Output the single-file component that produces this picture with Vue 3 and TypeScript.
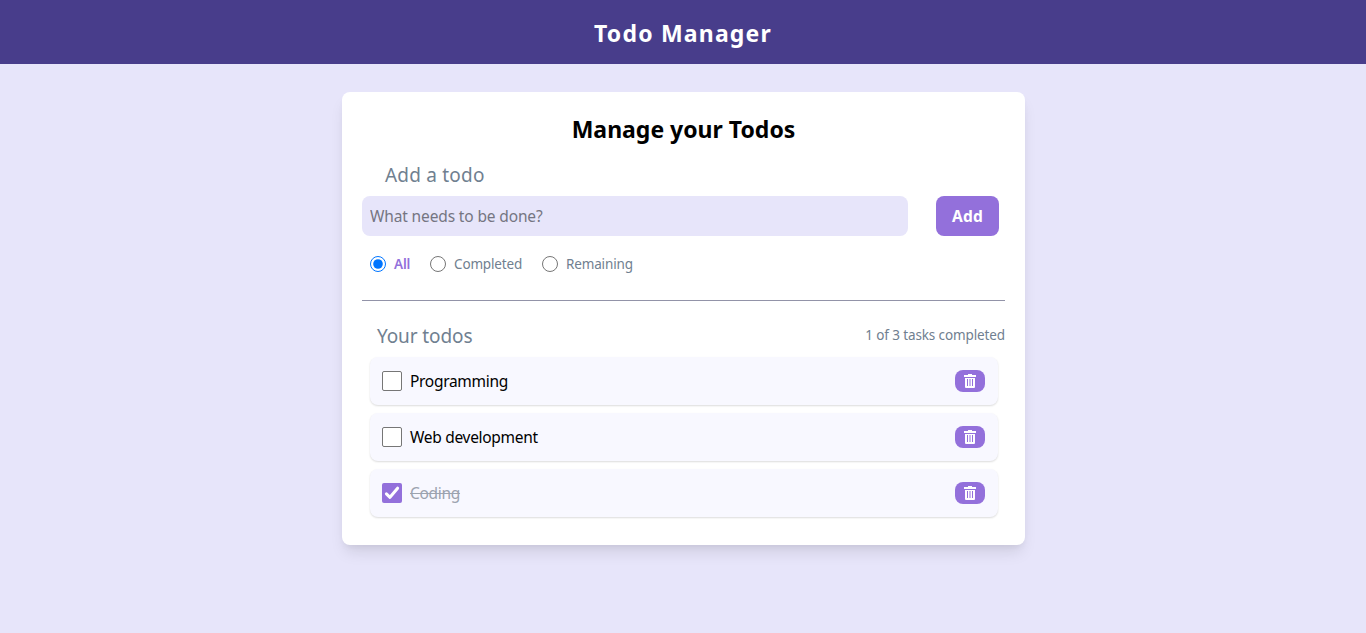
<script setup lang="ts">
import { computed, ref } from 'vue'

interface Todo {
  id: number
  title: string
  done: boolean
}
type Filter = 'All' | 'Completed' | 'Remaining'

const filters: Filter[] = ['All', 'Completed', 'Remaining']
const filter = ref<Filter>('All')
const draft = ref('')
const todos = ref<Todo[]>([
  { id: 1, title: 'Programming', done: false },
  { id: 2, title: 'Web development', done: false },
  { id: 3, title: 'Coding', done: true },
])

const doneCount = computed(() => todos.value.filter((t) => t.done).length)
const visible = computed(() =>
  todos.value.filter((t) => filter.value === 'All' || t.done === (filter.value === 'Completed')),
)

function add() {
  const title = draft.value.trim()
  if (!title) return
  todos.value.push({ id: Date.now(), title, done: false })
  draft.value = ''
}
function remove(id: number) {
  todos.value = todos.value.filter((t) => t.id !== id)
}
</script>

<template>
  <div class="page">
    <header class="bar"><h1 class="brand">Todo Manager</h1></header>
    <main class="card">
      <h2 class="title">Manage your Todos</h2>
      <label class="add-label" for="new-todo">Add a todo</label>
      <form class="add-row" @submit.prevent="add">
        <input id="new-todo" v-model="draft" class="field" type="text" placeholder="What needs to be done?" />
        <button class="add" type="submit">Add</button>
      </form>
      <div class="filters">
        <label v-for="f in filters" :key="f" class="filter" :class="[f.toLowerCase(), { active: filter === f }]">
          <input v-model="filter" class="radio" type="radio" name="filter" :value="f" />
          <span class="filter-text">{{ f }}</span>
        </label>
      </div>
      <hr class="rule" />
      <div class="list-head">
        <h3 class="list-title">Your todos</h3>
        <span class="count">{{ doneCount }} of {{ todos.length }} tasks completed</span>
      </div>
      <ul class="list">
        <li v-for="t in visible" :key="t.id" class="item" :class="{ done: t.done }">
          <label class="check">
            <input v-model="t.done" class="native" type="checkbox" />
            <span class="box">
              <svg v-if="t.done" width="20" height="20" viewBox="0 0 20 20">
                <path
                  d="M4.4 10.8 8 14.3 15.6 5.2"
                  fill="none"
                  stroke="#fff"
                  stroke-width="3"
                  stroke-linecap="round"
                  stroke-linejoin="round"
                />
              </svg>
            </span>
            <span class="text">{{ t.title }}</span>
          </label>
          <button class="delete" type="button" aria-label="Delete" @click="remove(t.id)">
            <svg width="12" height="14" viewBox="0 0 12 14">
              <path
                fill="#fff"
                fill-rule="evenodd"
                d="M4 0h4v1h4v2H0V1h4zM1 4h10v9q0 1-1 1H2q-1 0-1-1zM3 5v7h1V5zM5.5 5v7h1V5zM8 5v7h1V5z"
              />
            </svg>
          </button>
        </li>
      </ul>
    </main>
  </div>
</template>

<style>
body {
  margin: 0;
  background: #e7e5fa;
}
</style>

<style scoped>
.page {
  box-sizing: border-box;
  min-height: 633px;
  background: #e7e5fa;
  font-family: 'Noto Sans', 'Open Sans', sans-serif;
}
.page * {
  box-sizing: border-box;
}
.bar {
  display: flex;
  height: 64px;
  align-items: center;
  justify-content: center;
  background: #483d8b;
}
.brand {
  margin: 0;
  padding-top: 1px;
  color: #fff;
  font-size: 23px;
  font-weight: 700;
  line-height: 32px;
  letter-spacing: 1.2px;
}
.card {
  width: 683px;
  height: 453px;
  margin: 28px auto 0 342px;
  padding: 20px;
  border-radius: 8px;
  background: #fff;
  box-shadow: 0 10px 15px -3px rgba(0, 0, 0, 0.1), 0 4px 6px -2px rgba(0, 0, 0, 0.05);
}
.title {
  margin: 1px 0 0;
  color: #000;
  font-size: 23px;
  font-weight: 700;
  line-height: 32px;
  text-align: center;
}
.add-label {
  display: block;
  margin: 16px 0 0 23px;
  color: #708090;
  font-size: 19px;
  line-height: 28px;
  letter-spacing: 0.2px;
}
.add-row {
  display: flex;
  gap: 28px;
  margin-top: 7px;
}
.field {
  width: 546px;
  height: 40px;
  padding: 0 8px;
  border: 0;
  border-radius: 8px;
  outline: 0;
  background: #e7e5fa;
  color: #000;
  font-family: inherit;
  font-size: 15.5px;
  letter-spacing: -0.14px;
}
.field::placeholder {
  color: #757582;
  opacity: 1;
}
.add {
  width: 63px;
  height: 40px;
  padding: 0;
  border: 0;
  border-radius: 8px;
  background: #9370db;
  color: #fff;
  font-family: inherit;
  font-size: 15.5px;
  font-weight: 700;
  letter-spacing: 0.2px;
}
.filters {
  display: flex;
  height: 20px;
  margin: 18px 0 0 8px;
}
.filter {
  display: flex;
  width: 112px;
  align-items: center;
  gap: 8px;
  color: #708090;
  font-size: 13.5px;
  line-height: 20px;
  letter-spacing: -0.15px;
}
.filter.all {
  width: 60px;
}
.filter.active {
  color: #9370db;
  font-weight: 600;
}
.filter-text {
  white-space: nowrap;
}
.radio {
  width: 16px;
  height: 16px;
  margin: 0;
}
.rule {
  height: 1px;
  margin: 26px 0 0;
  border: 0;
  background: #9293a8;
}
.list-head {
  display: flex;
  height: 28px;
  margin-top: 20px;
  align-items: center;
  justify-content: space-between;
}
.list-title {
  margin: 0 0 0 15px;
  padding-top: 1px;
  color: #708090;
  font-size: 19px;
  font-weight: 400;
  line-height: 28px;
  letter-spacing: -0.1px;
}
.count {
  color: #708090;
  font-size: 13.5px;
  line-height: 20px;
  letter-spacing: -0.12px;
}
.list {
  display: grid;
  gap: 8px;
  margin: 8px 7px 0 8px;
  padding: 0;
  list-style: none;
}
.item {
  display: flex;
  height: 48px;
  padding: 0 13px 0 12px;
  align-items: center;
  justify-content: space-between;
  border-radius: 8px;
  background: #f8f8ff;
  box-shadow: 0 1px 2px rgba(0, 0, 0, 0.14);
}
.check {
  display: flex;
  align-items: center;
  gap: 8px;
  color: #000;
  font-size: 15.5px;
  line-height: 24px;
  letter-spacing: -0.3px;
}
.native {
  position: absolute;
  opacity: 0;
}
.box {
  display: block;
  width: 20px;
  height: 20px;
  border: 1px solid #767676;
  border-radius: 2px;
  background: #fff;
}
.done .box {
  border: 0;
  background: #9370db;
}
.box svg {
  display: block;
}
.done .text {
  color: #9ca3af;
  text-decoration: line-through;
}
.delete {
  display: flex;
  width: 30px;
  height: 22px;
  padding: 0;
  align-items: center;
  justify-content: center;
  border: 0;
  border-radius: 8px;
  background: #9370db;
}
</style>
